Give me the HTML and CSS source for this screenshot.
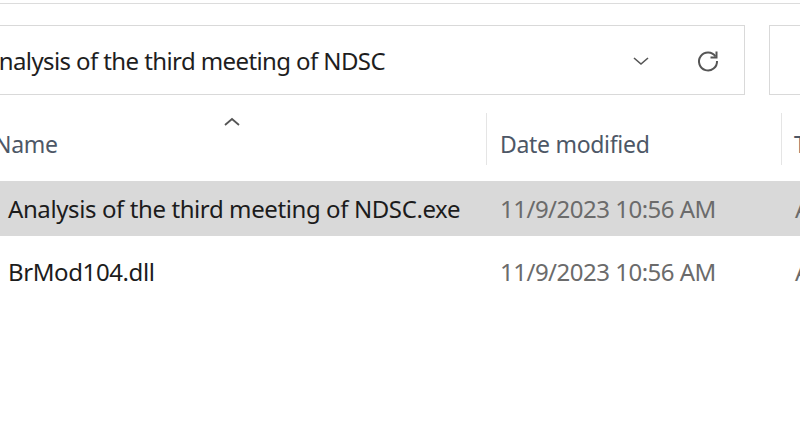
FILE: index.html
```html
<!DOCTYPE html>
<html>
<head>
<meta charset="utf-8">
<link rel="stylesheet" href="styles.css">
</head>
<body>
<div class="window">
  <div class="topline"></div>
  <div class="toolbar">
    <div class="address">
      <span class="addr-text">Analysis of the third meeting of NDSC</span>
      <span class="chev">
        <svg width="20" height="12" viewBox="0 0 20 12"><path d="M3 3 L10 9 L17 3" fill="none" stroke="#555" stroke-width="1.6"/></svg>
      </span>
      <span class="refresh">
        <svg width="26" height="26" viewBox="0 0 26 26"><path d="M20.5 8.5 A9 9 0 1 0 22 13" fill="none" stroke="#555" stroke-width="2"/><path d="M21.5 3.5 L21.5 9.5 L15.5 9.5" fill="none" stroke="#555" stroke-width="2"/></svg>
      </span>
    </div>
    <div class="search"></div>
  </div>
  <div class="header">
    <div class="col col-name">
      <span class="sort"><svg width="20" height="12" viewBox="0 0 20 12"><path d="M3 9 L10 3 L17 9" fill="none" stroke="#555" stroke-width="1.8"/></svg></span>
      <span class="htext name-h">Name</span>
    </div>
    <div class="col col-date"><span class="htext">Date modified</span></div>
    <div class="col col-type"><span class="htext">T</span></div>
  </div>
  <div class="rows">
    <div class="row selected">
      <div class="cell c-name">Analysis of the third meeting of NDSC.exe</div>
      <div class="cell c-date">11/9/2023 10:56 AM</div>
      <div class="cell c-type">A</div>
    </div>
    <div class="row">
      <div class="cell c-name">BrMod104.dll</div>
      <div class="cell c-date">11/9/2023 10:56 AM</div>
      <div class="cell c-type">A</div>
    </div>
  </div>
</div>
</body>
</html>
```

FILE: styles.css
```css
html, body {
  margin: 0;
  padding: 0;
  background: #ffffff;
}
body {
  width: 800px;
  height: 426px;
  overflow: hidden;
  font-family: "Noto Sans", "Open Sans", sans-serif;
}
.window {
  width: 800px;
  height: 426px;
  overflow: hidden;
}
.topline {
  height: 3px;
  border-bottom: 1px solid #dcdcdc;
}
.toolbar {
  display: flex;
  margin-top: 21px;
  height: 70px;
  gap: 24px;
}
.address {
  flex: 0 0 auto;
  width: 798px;
  margin-left: -55px;
  height: 68px;
  border: 1px solid #d9d9d9;
  display: flex;
  align-items: center;
  overflow: hidden;
}
.addr-text {
  font-size: 24px;
  color: #1e1e1e;
  padding-left: 38px;
  letter-spacing: -0.6px;
  flex: 1;
  white-space: nowrap;
}
.chev {
  display: flex;
  margin-right: 44px;
  margin-top: 2px;
}
.refresh {
  display: flex;
  margin-right: 23px;
  margin-top: 2px;
}
.search {
  flex: 0 0 auto;
  width: 100px;
  height: 68px;
  border: 1px solid #d9d9d9;
}
.header {
  display: flex;
  height: 86px;
}
.col {
  display: flex;
  align-items: center;
  height: 52px;
  margin-top: 18px;
  flex-shrink: 0;
}
.col-name {
  width: 492px;
  margin-left: -6px;
  position: relative;
}
.col-date {
  width: 294px;
  border-left: 1px solid #e5e5e5;
}
.col-type {
  width: 40px;
  border-left: 1px solid #e5e5e5;
}
.htext {
  font-size: 23px;
  color: #4d5766;
  letter-spacing: -0.3px;
  margin-top: 10px;
  white-space: nowrap;
}
.col-date .htext {
  padding-left: 13px;
}
.col-type .htext {
  padding-left: 12px;
}
.sort {
  position: absolute;
  left: 228px;
  top: 3px;
  display: flex;
}
.rows {
  display: flex;
  flex-direction: column;
}
.row {
  display: flex;
  align-items: center;
  height: 55px;
  margin-bottom: 8px;
}
.row.selected {
  background: #d9d9d9;
}
.cell {
  font-size: 24px;
  white-space: nowrap;
  letter-spacing: -0.4px;
  flex-shrink: 0;
}
.c-name {
  width: 486px;
  padding-left: 8px;
  box-sizing: border-box;
  color: #1c1c1c;
}
.c-date {
  width: 295px;
  padding-left: 14px;
  box-sizing: border-box;
  color: #6b6b6b;
  letter-spacing: -0.5px;
}
.c-type {
  width: 40px;
  padding-left: 14px;
  color: #6b6b6b;
}
```
